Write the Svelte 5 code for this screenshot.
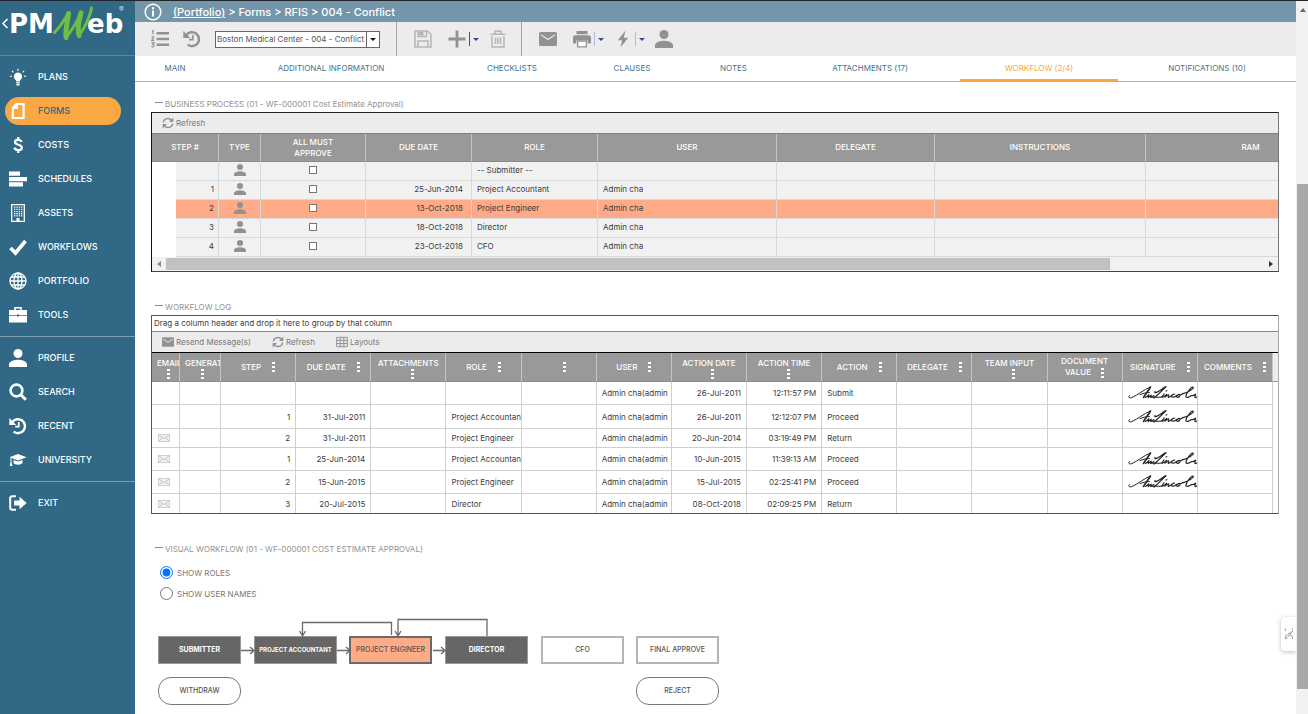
<script>
  const icons = {
    bulb: ['0 0 18 18', '<path d="M9 4.6a4 4 0 0 0-2.3 7.3l.5 1.6h3.6l.5-1.6A4 4 0 0 0 9 4.6zM7.1 14.2h3.8v1.2H7.1zM7.5 16h3v1.5h-3z"/><path d="M9 .7v2.2M2.9 2.9l1.5 1.5M15.1 2.9l-1.5 1.5M.8 8.3H3M17.2 8.3H15" stroke="currentColor" stroke-width="1.1"/>'],
    page: ['0 0 18 18', '<path d="M7.6 2h7v14H3.8V6.2z" fill="none" stroke="currentColor" stroke-width="2.2"/><path d="M3 7V5.4L7 1h2v6z"/>'],
    dollar: ['0 0 18 18', '<path d="M12.5 5.8C12 4.4 10.8 3.8 9.1 3.8 7.2 3.8 6 4.7 6 6.1c0 3.4 6.8 1.900 6.8 5.4 0 1.600-1.400 2.700-3.500 2.700-2 0-3.400-.9-3.900-2.500M9.200 1v3M9.200 14v3" fill="none" stroke="currentColor" stroke-width="2.300"/>'],
    bars: ['0 0 18 18', '<path d="M0 1.500h11v4.300H0zM0 6.900h18v4.300H0zM0 12.300h14v4.200H0z"/>'],
    building: ['0 0 18 18', '<path d="M2.700.7h12.600v16.600H2.700z" fill="none" stroke="currentColor" stroke-width="1.300"/><path d="M5.700 2.500v11M8 2.500v11M10.300 2.500v11M12.600 2.500v11" stroke="currentColor" stroke-width="1.300" stroke-dasharray="1.300 .9"/><path d="M7.500 14h3v3h-3z"/>'],
    check: ['0 0 18 18', '<path d="M1.500 10l5 5L16.500 3" fill="none" stroke="currentColor" stroke-width="3.600"/>'],
    globe: ['0 0 18 18', '<g fill="none" stroke="currentColor" stroke-width="1.300"><circle cx="9" cy="9" r="8"/><ellipse cx="9" cy="9" rx="4" ry="8"/><path d="M9 1v16M1 9h16M2.300 5h13.400M2.300 13h13.400"/></g>'],
    case: ['0 0 18 18', '<path d="M6 4V1.800h6V4" fill="none" stroke="currentColor" stroke-width="1.500"/><path d="M0 4h18v5h-8V8.500H8V9H0zM0 9.700h8v.8h2v-.8h8V16.500H0z"/>'],
    user: ['3 3 18 18', '<circle cx="12" cy="7.500" r="4.500"/><path d="M12 13.700c-3 0-9 1.200-9 4.600V21h18v-2.700c0-3.400-6-4.600-9-4.600z"/>'],
    search: ['0 0 18 18', '<circle cx="7.500" cy="7.500" r="5.900" fill="none" stroke="currentColor" stroke-width="2.600"/><path d="M11.800 11.800l5 5" stroke="currentColor" stroke-width="3"/>'],
    history: ['0 0 18 18', '<path d="M3.200 5.200A7 7 0 1 1 4.600 14.600" fill="none" stroke="currentColor" stroke-width="2.500"/><path d="M.3 1v7h7z"/><path d="M9.800 5v4.700H6.200" fill="none" stroke="currentColor" stroke-width="1.700"/>'],
    cap: ['0 0 18 18', '<path d="M9 3L.5 6.300 9 9.500l8.500-3.200z"/><path d="M4.500 8.900L9 10.600l4.500-1.700v3.200c-1.500 2.200-7.500 2.200-9 0zM1.500 7h1v4l1 4H.8l.7-4z"/>'],
    exit: ['0 0 18 18', '<path d="M7 2.200H3.300Q1.200 2.200 1.200 4.300v9.400q0 2.100 2.100 2.100H7" fill="none" stroke="currentColor" stroke-width="2"/><path d="M5 6.500h5.500V2.700L17.700 9l-7.200 6.300v-3.800H5z"/>'],
    list: ['0 0 18 18', '<path d="M5.500 3.300H18M5.500 9H18M5.500 14.700H18" stroke="currentColor" stroke-width="2.400"/><path d="M.8 1.300l1.300-.7v4M.5 7.200c1.500-1 2.600-.2 2 .9L.5 10.600h2.900M.5 12.800h2.700l-1.500 1.700c2 0 2 2.400 0 2.400q-.8 0-1.300-.5" fill="none" stroke="currentColor" stroke-width="1.200"/>'],
    save: ['0 0 18 18', '<g fill="none" stroke="currentColor" stroke-width="1.500"><path d="M1 1h12.500L17 4.500V17H1z"/><path d="M4 1v5.500h8.500V1M4 17v-6h10v6"/></g><path d="M4.500 1.500h5v4h-5z"/>'],
    plus: ['0 0 18 18', '<path d="M9 .5v17M.5 9h17" stroke="currentColor" stroke-width="2.800"/>'],
    trash: ['0 0 18 18', '<g fill="none" stroke="currentColor" stroke-width="1.500"><path d="M3 6v11h12V6M1.500 4.200h15M6 4V1.300h6V4M6.500 7.500V14M9 7.500V14M11.500 7.500V14"/></g>'],
    mail: ['0 0 18 18', '<path d="M1.500 2h15q1.500 0 1.500 1.500v11q0 1.500-1.500 1.500h-15Q0 16 0 14.500v-11Q0 2 1.500 2zm.3 2v1.300L9 10.300l7.200-5V4L9 8.700z" fill-rule="evenodd"/>'],
    print: ['0 0 18 18', '<path d="M3.500 1h11v3.300h-11zM2.500 5.300h13Q18 5.300 18 8v5.500h-3.300V10.200H3.300v3.300H0V8q0-2.700 2.500-2.700z"/><path d="M4.600 11h8.800v5.800H4.600z" fill="#fff" stroke="currentColor" stroke-width="1.300"/>'],
    bolt: ['0 0 18 18', '<path d="M11.500.5L3.800 10.300h4.300L6.500 17.500l7.700-9.800H9.700z"/>'],
    refresh: ['0 0 18 18', '<path d="M2 8a7 7 0 0 1 12.500-3M16 10a7 7 0 0 1-12.500 3" fill="none" stroke="currentColor" stroke-width="2.200"/><path d="M17 .8v6.700h-6.500zM1 17.200v-6.700h6.500z"/>'],
    grid: ['0 0 18 18', '<path d="M1 2h16v14H1zM1 6.500h16M1 11.300h16M6.300 2v14M11.700 2v14" fill="none" stroke="currentColor" stroke-width="1.500"/>'],
    info: ['0 0 18 18', '<circle cx="9" cy="9" r="7.800" fill="none" stroke="currentColor" stroke-width="1.500"/><path d="M8 7.500h2v6H8zM8 4.300h2v2H8z"/>'],
    letter: ['0 0 18 12', '<rect x=".5" y=".5" width="17" height="11" fill="#f1f1f6" stroke="#bcbcc8"/><path d="M2 2l7 5 7-5M2 10l4.500-4M16 10l-4.500-4" fill="none" stroke="#a9a9b8"/>']
  };

  const nav = [
    [['bulb', 'PLANS'], ['page', 'FORMS'], ['dollar', 'COSTS'], ['bars', 'SCHEDULES'], ['building', 'ASSETS'], ['check', 'WORKFLOWS'], ['globe', 'PORTFOLIO'], ['case', 'TOOLS']],
    [['user', 'PROFILE'], ['search', 'SEARCH'], ['history', 'RECENT'], ['cap', 'UNIVERSITY']],
    [['exit', 'EXIT']]
  ];

  const tabs = ['MAIN', 'ADDITIONAL INFORMATION', 'CHECKLISTS', 'CLAUSES', 'NOTES', 'ATTACHMENTS (17)', 'WORKFLOW (2/4)', 'NOTIFICATIONS (10)'];

  const steps = [
    ['', '', '-- Submitter --', ''],
    ['1', '25-Jun-2014', 'Project Accountant', 'Admin cha'],
    ['2', '13-Oct-2018', 'Project Engineer', 'Admin cha'],
    ['3', '18-Oct-2018', 'Director', 'Admin cha'],
    ['4', '23-Oct-2018', 'CFO', 'Admin cha']
  ];

  const logHead = [
    ['EMAIL', true], ['GENERATED', true], ['STEP', false], ['DUE DATE', false], ['ATTACHMENTS', true], ['ROLE', false], ['', false], ['USER', false],
    ['ACTION DATE', true], ['ACTION TIME', true], ['ACTION', false], ['DELEGATE', false], ['TEAM INPUT', true], ['DOCUMENT VALUE', false], ['SIGNATURE', false], ['COMMENTS', false]
  ];

  const log = [
    { email: false, step: '', due: '', role: '', date: '26-Jul-2011', time: '12:11:57 PM', action: 'Submit', signed: true, h: 23 },
    { email: false, step: '1', due: '31-Jul-2011', role: 'Project Accountant', date: '26-Jul-2011', time: '12:12:07 PM', action: 'Proceed', signed: true, h: 24 },
    { email: true, step: '2', due: '31-Jul-2011', role: 'Project Engineer', date: '20-Jun-2014', time: '03:19:49 PM', action: 'Return', signed: false, h: 19 },
    { email: true, step: '1', due: '25-Jun-2014', role: 'Project Accountant', date: '10-Jun-2015', time: '11:39:13 AM', action: 'Proceed', signed: true, h: 23 },
    { email: true, step: '2', due: '15-Jun-2015', role: 'Project Engineer', date: '15-Jul-2015', time: '02:25:41 PM', action: 'Proceed', signed: true, h: 23 },
    { email: true, step: '3', due: '20-Jul-2015', role: 'Director', date: '08-Oct-2018', time: '02:09:25 PM', action: 'Return', signed: false, h: 19 }
  ];

  const nodes = [
    [0, 'SUBMITTER', 'done'],
    [96, 'PROJECT ACCOUNTANT', 'done small'],
    [191, 'PROJECT ENGINEER', 'current'],
    [287, 'DIRECTOR', 'done'],
    [383, 'CFO', ''],
    [478, 'FINAL APPROVE', '']
  ];

  let show = $state('roles');
</script>

{#snippet icon(name, cls = '')}
  <svg class="icon {cls}" viewBox={icons[name][0]} fill="currentColor" aria-hidden="true">{@html icons[name][1]}</svg>
{/snippet}

{#snippet dots()}
  <svg class="dots" viewBox="0 0 3 10" aria-hidden="true"><path d="M0 0h3v2H0zM0 4h3v2H0zM0 8h3v2H0z" fill="#fff" /></svg>
{/snippet}

<div class="app">
  <aside>
    <div class="brand">
      <svg viewBox="0 0 134 54" role="img" aria-label="PMWeb">
        <path d="M7.500 18L3 22.500l4.500 4.500" fill="none" stroke="#fff" stroke-width="1.600" />
        <text x="9" y="32" class="word">PM</text>
        <text x="87" y="32" class="word">eb</text>
        <g fill="none" stroke="#6cbe45" stroke-linejoin="round" stroke-linecap="round">
          <path d="M54.500 31.500C60 26 65 18 68.500 12" stroke-width="3" />
          <path d="M68.500 12.500C68 20 65 28 66 36.500" stroke-width="5" />
          <path d="M66 36.500C72 29 78 19 81 11" stroke-width="3" />
          <path d="M81 12C79 19 77 28 79 34.500" stroke-width="5" />
          <path d="M79 34.500C85 26 90 16 91.500 7" stroke-width="3" />
        </g>
        <text x="119" y="11" class="reg">®</text>
      </svg>
    </div>
    <nav>
      {#each nav as group}
        <div class="group">
          {#each group as [ic, label]}
            <a href="#{label.toLowerCase()}" class:active={label === 'FORMS'}>{@render icon(ic)}<span>{label}</span></a>
          {/each}
        </div>
      {/each}
    </nav>
  </aside>

  <main>
    <header>
      {@render icon('info')}
      <span><a href="#portfolio">(Portfolio)</a> &gt; Forms &gt; RFIS &gt; 004 - Conflict</span>
    </header>

    <div class="toolbar">
      <div class="tools first">
        <button aria-label="List">{@render icon('list')}</button>
        <button aria-label="History">{@render icon('history')}</button>
        <div class="combo">
          <select aria-label="Record"><option>Boston Medical Center - 004 - Conflict</option></select>
          <span><i class="caret dark"></i></span>
        </div>
      </div>
      <div class="tools second">
        <button class="faded" aria-label="Save">{@render icon('save')}</button>
        <button class="split" aria-label="Add">{@render icon('plus')}<i class="bar strong"></i><i class="caret"></i></button>
        <button class="faded" aria-label="Delete">{@render icon('trash')}</button>
      </div>
      <div class="tools third">
        <button aria-label="Email">{@render icon('mail')}</button>
        <button class="split" aria-label="Print">{@render icon('print')}<i class="bar"></i><i class="caret"></i></button>
        <button class="split" aria-label="Actions">{@render icon('bolt')}<i class="bar"></i><i class="caret"></i></button>
        <button aria-label="User">{@render icon('user')}</button>
      </div>
    </div>

    <div class="tabs">
      {#each tabs as tab}
        <a href="#tab" class:on={tab.startsWith('WORKFLOW')}>{tab}</a>
      {/each}
    </div>

    <div class="content">
      <section>
        <h2><i></i>BUSINESS PROCESS (01 - WF-000001 Cost Estimate Approval)</h2>
        <div class="box process">
          <div class="commands"><button>{@render icon('refresh')}Refresh</button></div>
          <div class="clip">
            <table>
              <colgroup>
                <col style="width:24px" /><col style="width:43px" /><col style="width:42px" /><col style="width:105px" /><col style="width:106px" /><col style="width:126px" /><col style="width:179px" /><col style="width:158px" /><col style="width:211px" /><col style="width:210px" />
              </colgroup>
              <thead>
                <tr><th colspan="2">STEP #</th><th>TYPE</th><th><span class="two">ALL MUST APPROVE</span></th><th>DUE DATE</th><th>ROLE</th><th>USER</th><th>DELEGATE</th><th>INSTRUCTIONS</th><th>RAM</th></tr>
              </thead>
              <tbody>
                {#each steps as [n, due, role, user]}
                  <tr class:hot={n === '2'}>
                    <td class="blank"></td>
                    <td class="num">{n}</td>
                    <td class="mid">{@render icon('user')}</td>
                    <td class="mid"><input type="checkbox" aria-label="All must approve" /></td>
                    <td class="num">{due}</td>
                    <td>{role}</td>
                    <td>{user}</td>
                    <td></td><td></td><td></td>
                  </tr>
                {/each}
              </tbody>
            </table>
          </div>
          <div class="hscroll"><i class="left"></i><div><b></b></div><i class="right"></i></div>
        </div>
      </section>

      <section>
        <h2><i></i>WORKFLOW LOG</h2>
        <div class="box log">
          <p>Drag a column header and drop it here to group by that column</p>
          <div class="commands">
            <button>{@render icon('mail')}Resend Message(s)</button>
            <button>{@render icon('refresh')}Refresh</button>
            <button>{@render icon('grid')}Layouts</button>
          </div>
          <div class="scrollpad">
            <table>
              <colgroup>
                <col style="width:28px" /><col style="width:41px" />
                {#each Array(14) as _}<col />{/each}
              </colgroup>
              <thead>
                <tr>
                  {#each logHead as [label, stacked]}
                    <th><div class="head" class:stacked class:narrow={label === 'EMAIL' || label === 'GENERATED'}>
                      {#if label === 'DOCUMENT VALUE'}
                        <span>DOCUMENT<br />VALUE <span class="inline">{@render dots()}</span></span>
                      {:else}
                        <span>{label}</span>{@render dots()}
                      {/if}
                    </div></th>
                  {/each}
                </tr>
              </thead>
              <tbody>
                {#each log as row}
                  <tr style="height:{row.h}px">
                    <td>{#if row.email}{@render icon('letter', 'letter')}{/if}</td>
                    <td></td>
                    <td class="num">{row.step}</td>
                    <td class="num">{row.due}</td>
                    <td></td>
                    <td>{row.role}</td>
                    <td></td>
                    <td>Admin cha(admin</td>
                    <td class="num">{row.date}</td>
                    <td class="num">{row.time}</td>
                    <td>{row.action}</td>
                    <td></td><td></td><td></td>
                    <td>
                      {#if row.signed}
                        <svg class="sign" viewBox="0 0 70 16" role="img" aria-label="Signature">
                          <g fill="none" stroke="#26262a" stroke-linecap="round" stroke-linejoin="round">
                            <path d="M1.500 10.500C-.5 12.500 1.500 13.500 4 12.500 10 10 15 5 22.500 2M12 9.500q5-2 9.500-2" stroke-width="1" />
                            <path d="M22.500 2C20.500 5.500 17.500 9 15.500 12.500" stroke-width="1.600" />
                            <path d="M17.500 12.500l3.500-2.700-.8 2.900 3-2.600-.5 2.400 3.300-2" stroke-width="1.100" />
                            <path d="M27 6.500C26 9 30 7 33.500 4.500S39 .8 37.500 2.200 31 9 26 13" stroke-width="1.300" />
                            <path d="M24 12.300c3-1 5 .9 10-.6" stroke-width="1.200" />
                            <path d="M36 8.800l-2 3.200c.5.600 2-.2 4.500-2.700l-1.500 2.900c3-3 4.500-3.300 3.200-.7-.6 1.600 1.800.5 3.500-1M46.500 9.200c-2-.4-4 2.700-2 3 1.500.2 3-.8 4-1.700M51 9.300c-2 .5-3.200 3-1.300 3S53 9.500 51 9.300c1 1 3 0 4-.7" stroke-width="1.200" />
                            <path d="M55 8.600C59 8 67 3 65 2.200S56 11.500 58.500 12.300s4.500-2.300 6-1.800 2.500-1.500 3-1.500-1 2.500-.5 3.300 2-.4 3-1.300" stroke-width="1.200" />
                            <path d="M38 6l.8-.3" stroke-width="1.200" />
                          </g>
                        </svg>
                      {/if}
                    </td>
                    <td></td>
                  </tr>
                {/each}
              </tbody>
            </table>
          </div>
        </div>
      </section>

      <section>
        <h2><i></i>VISUAL WORKFLOW (01 - WF-000001 COST ESTIMATE APPROVAL)</h2>
        <div class="radios">
          <label><input type="radio" name="show" value="roles" bind:group={show} />SHOW ROLES</label>
          <label><input type="radio" name="show" value="names" bind:group={show} />SHOW USER NAMES</label>
        </div>
        <div class="diagram">
          {#each nodes as [x, label, kind]}
            <div class="node {kind}" style="left:{x}px">{label}</div>
          {/each}
          <svg class="links" viewBox="0 0 570 94" aria-hidden="true">
            <g fill="none" stroke="#6a6a6a" stroke-width="1.300">
              <path d="M83 33.500h13M92 30l4 3.500-4 3.500M179 33.500h13M188 30l4 3.500-4 3.500M275 33.500h12M283 30l4 3.500-4 3.500" />
              <path d="M233.500 18V5.500H144.500V19M141.500 14l3 5 3-5M329 19V2.500H240V19M237 14l3 5 3-5" />
            </g>
          </svg>
          <button style="left:0">WITHDRAW</button>
          <button style="left:478px">REJECT</button>
        </div>
      </section>
    </div>
    <button class="helper" aria-label="Open helper">
      <svg viewBox="0 0 10 14"><path d="M1.500 12V8.500L8.500 4.500V1.500M8.500 12V9.500M1.500 1.500v3M1.500 12l7-7.500M6 8l2.500 1.500" fill="none" stroke="#a2a2ac" stroke-width="1.100" stroke-dasharray="2.500 .7" /></svg>
    </button>
  </main>

  <div class="vscroll"><i></i><b></b></div>
</div>

<style>
  :global(body) { margin: 0; background: #fff; }
  .app { display: grid; grid-template-columns: 135px minmax(0, 1fr) 12px; min-height: 100vh; box-sizing: border-box; border-top: 1px solid #20252c; font: 8px/12px Inter, sans-serif; color: #3c3c3c; }
  button { font: inherit; color: inherit; background: none; border: 0; padding: 0; }
  a { color: inherit; text-decoration: none; }
  .icon { width: 18px; height: 18px; flex: none; display: block; }

  aside { background: #316885; color: #fff; }
  .brand { height: 54px; border-bottom: 1px solid #5c889e; }
  .brand svg { display: block; width: 134px; height: 54px; }
  .word { font: bold 26px "DejaVu Sans", sans-serif; fill: #fff; }
  .reg { font: 7px Inter, sans-serif; fill: #d4e0e7; }
  nav { padding-top: 4px; }
  .group { display: flex; flex-direction: column; gap: 6px; padding: 3px 0 7px; }
  .group + .group { border-top: 1px solid #7e9fb1; padding-top: 7px; }
  .group a { display: flex; align-items: center; gap: 11px; height: 28px; margin: 0 14px 0 5px; padding-left: 4px; border-radius: 14px; font-size: 9px; font-weight: 500; }
  .group a.active { background: #f9a843; }
  .group a.active span { color: #316885; }

  main { min-width: 0; position: relative; }
  header { display: flex; align-items: center; gap: 11px; height: 21px; padding-left: 9px; background: #7396aa; color: #fff; font-size: 11px; font-weight: 500; }
  header a { text-decoration: underline; }
  .toolbar { display: flex; height: 34px; background: #ececec; color: #929292; }
  .tools { display: flex; align-items: center; gap: 16px; }
  .tools + .tools { border-left: 1px solid #a4a4a4; }
  .first { padding: 0 16px; gap: 14px; }
  .second { padding: 0 14px 0 17px; }
  .third { padding-left: 17px; }
  .faded { opacity: .6; }
  .split { display: flex; align-items: center; gap: 3px; margin-right: -6px; }
  .bar { width: 1px; height: 14px; background: #b6bad6; }
  .bar.strong { background: #3f51a0; }
  .caret { border: 3px solid transparent; border-top-color: #3446a0; border-bottom: 0; }
  .caret.dark { border-top-color: #111; }
  .combo { display: flex; box-sizing: border-box; width: 165px; height: 17px; border: 1px solid #666; background: #fff; }
  .combo select { flex: 1; min-width: 0; appearance: none; border: 0; padding: 0 1px; background: none; font: inherit; color: #555; }
  .combo span { width: 12px; border-left: 1px solid #666; display: grid; place-items: center; }

  .tabs { display: grid; grid-template-columns: 80fr 232fr 130fr 110fr 93fr 180fr 158fr 178fr; border-bottom: 1px solid #b0b0b0; color: #3e7391; }
  .tabs a { text-align: center; line-height: 24px; height: 23px; border-bottom: 2px solid transparent; white-space: nowrap; }
  .tabs a.on { color: #f9a843; border-color: #f9a843; }

  .content { padding: 16px 17px 8px 16px; display: grid; grid-template-columns: minmax(0, 1fr); gap: 29px; }
  h2 { display: flex; align-items: center; gap: 2px; margin: 0 0 2px 4px; font-size: 8px; font-weight: 400; line-height: 12px; color: #929292; }
  h2 i { width: 8px; height: 1px; background: #8a8a8a; margin-bottom: 3px; }
  .box { border: 1px solid #555; }
  .process { border-color: #222 #777 #444 #111; }
  .commands { display: flex; gap: 21px; align-items: center; box-sizing: border-box; height: 21px; padding-left: 10px; background: #ececec; border-bottom: 1px solid #6d8894; color: #777; }
  .log .commands { border-bottom-color: #000; }
  .commands button { display: flex; align-items: center; gap: 2px; }
  .commands .icon { width: 12px; height: 12px; color: #929292; }
  table { border-collapse: separate; border-spacing: 0; table-layout: fixed; }
  th { background: #999; color: #fff; font-weight: 500; padding: 0; border-right: 1px solid #c4c4c4; border-bottom: 1px solid #8c8c8c; overflow: hidden; }
  td { padding: 0 4px; white-space: nowrap; overflow: hidden; border-right: 1px solid #cfcfcf; border-bottom: 1px solid #cfcfcf; }
  .num { text-align: right; }
  .clip { overflow: hidden; }
  .process table { width: 1204px; min-width: 100%; }
  .process th { height: 27px; line-height: 11px; }
  .two { display: inline-block; width: 50px; }
  .process td { box-sizing: border-box; height: 19px; padding: 0 7px 3px 5px; line-height: 12px; background: #f1f1f1; border-color: #d8d8d8; }
  .process td.num { padding-right: 4px; }
  .process td:nth-child(5) { padding-right: 8px; }
  .process td.blank { background: #fff; border: 0; }
  .process tr.hot td:not(.blank) { background: #ffab87; }
  .process td.mid { padding: 0 0 3px; }
  .mid .icon { width: 12px; height: 12px; margin: 0 auto; color: #929292; }
  .mid input { display: block; appearance: none; width: 8px; height: 8px; margin: 0 auto; border: 1px solid #777; background: #fff; box-sizing: border-box; }
  .hscroll { display: flex; align-items: center; height: 14px; padding: 0 5px; gap: 5px; background: #f1f1f1; }
  .hscroll div { flex: 1; }
  .hscroll b { display: block; width: 86%; height: 12px; background: #c1c1c1; }
  .left { border: 3px solid transparent; border-right: 4px solid #888; border-left: 0; }
  .right { border: 3px solid transparent; border-left: 4px solid #333; border-right: 0; }

  .log { border-right-color: #aaa; }
  .log p { margin: 0; padding-left: 2px; line-height: 15px; border-bottom: 1px solid #888; }
  .log table { width: 100%; background: #fff; }
  .scrollpad { padding-right: 5px; background: linear-gradient(#ececec 28px, #999 28px, #999 29px, #fff 29px); }
  .log th { height: 28px; line-height: 11px; }
  .head { display: flex; align-items: center; justify-content: center; gap: 11px; height: 28px; }
  .head.stacked { flex-direction: column; justify-content: flex-end; gap: 0; height: 26px; padding-bottom: 2px; }
  .head.stacked:not(.narrow) .dots { margin-left: 8px; }
  .head.narrow { align-items: flex-start; padding-left: 5px; }
  .head.narrow .dots { align-self: center; }
  .dots { display: block; width: 3px; height: 10px; flex: none; }
  .inline { display: inline-block; vertical-align: bottom; margin-left: 8px; }
  .log td { padding: 0 0 0 5px; line-height: 12px; }
  .log td.num { padding: 0 5px 0 0; }
  .log tr:last-child td { border-bottom: 0; }
  .log .letter { width: 12px; height: 8px; margin-left: 1px; }
  .sign { display: block; width: 70px; height: 16px; }

  .radios { display: grid; gap: 8px; margin: 11px 0 0 9px; color: #777; }
  label { display: flex; align-items: center; gap: 4px; height: 13px; }
  .radios input { width: 13px; height: 13px; margin: 0; }
  .diagram { position: relative; height: 90px; margin: 17px 0 0 7px; }
  .links { position: absolute; left: 0; top: 0; width: 570px; height: 94px; }
  .node, .diagram button { position: absolute; box-sizing: border-box; width: 83px; height: 28px; display: grid; place-items: center; font-size: 7px; font-weight: 500; color: #555; white-space: nowrap; }
  .node { top: 19px; border: 2px solid #b4b4b4; background: #fff; }
  .node.done { border: 1px solid #999; background: #666; color: #fff; font-weight: 700; }
  .node.small { font-size: 6px; }
  .node.current { border-color: #6a6a6a; background: #ffab87; }
  .diagram button { top: 60px; border: 1px solid #777; border-radius: 13px; background: #fff; }
  .helper { position: absolute; right: 0; bottom: 64px; width: 15px; height: 34px; display: grid; place-items: center; background: #fff; border-radius: 4px 0 0 4px; box-shadow: 0 1px 4px #0004; }
  .helper svg { width: 10px; height: 14px; }

  .vscroll { position: relative; background: #f1f1f1; }
  .vscroll i { position: absolute; left: 4px; top: 7px; border: 3px solid transparent; border-bottom: 4px solid #666; border-top: 0; }
  .vscroll b { position: absolute; left: 1px; right: 0; top: 25.6%; height: 70.8%; background: #a8a8a8; }
</style>
